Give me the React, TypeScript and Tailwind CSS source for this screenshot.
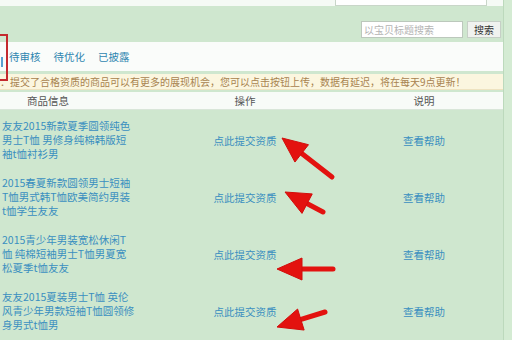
import React from "react";

const rows = [
  ["友友2015新款夏季圆领纯色", "男士T恤 男修身纯棉韩版短", "袖t恤衬衫男"],
  ["2015春夏新款圆领男士短袖", "T恤男式韩T恤欧美简约男装", "t恤学生友友"],
  ["2015青少年男装宽松休闲T", "恤 纯棉短袖男士T恤男夏宽", "松夏季t恤友友"],
  ["友友2015夏装男士T恤 英伦", "风青少年男款短袖T恤圆领修", "身男式t恤男"],
];

function Arrow({ x1, y1, x2, y2 }: { x1: number; y1: number; x2: number; y2: number }) {
  const dx = x2 - x1;
  const dy = y2 - y1;
  const len = Math.hypot(dx, dy);
  const ux = dx / len;
  const uy = dy / len;
  const hl = 25;
  const hw = 11;
  const bx = x1 + ux * hl;
  const by = y1 + uy * hl;
  const px = -uy;
  const py = ux;
  const pts = `${x1},${y1} ${bx + px * hw},${by + py * hw} ${bx - px * hw},${by - py * hw}`;
  return (
    <g>
      <line x1={bx - ux * 4} y1={by - uy * 4} x2={x2} y2={y2} stroke="#e3120f" strokeWidth={5} strokeLinecap="round" />
      <polygon points={pts} fill="#e3120f" stroke="#d20d0b" strokeWidth={1} strokeLinejoin="round" />
    </g>
  );
}

export default function App() {
  return (
    <div
      className="relative w-[512px] h-[340px] overflow-hidden bg-[#cfe7cf] flex"
      style={{ fontFamily: '"Noto Sans CJK SC", "Noto Sans", sans-serif' }}
    >
      <div className="w-[503px] flex flex-col">
        <div className="h-[7px] bg-[#f5faf5] flex justify-end pr-[16px]">
          <div className="w-[152px] h-[6px] border-x border-b border-[#c9d6c9] bg-white" />
        </div>
        <div className="h-[40px] flex items-end justify-end pr-[2px] pb-[4px] gap-[4px]">
          <div className="w-[102px] h-[17px] bg-white border border-[#bcc8bc] text-[10px] leading-[15px] text-[#b4b4b4] pl-[2px]">
            以宝贝标题搜索
          </div>
          <div className="w-[34px] h-[17px] bg-[#f0f2ef] border border-[#c6cfc6] text-[10px] leading-[15px] text-[#333] text-center">
            搜索
          </div>
        </div>
        <div className="h-[33px] bg-[#fafcfa] flex items-center gap-[13px] pl-[9px] text-[10.5px] text-[#2f86b0]">
          <span>待审核</span>
          <span>待优化</span>
          <span>已披露</span>
        </div>
        <div className="mt-[3px] h-[16px] bg-[#fbf6df] border-b border-[#eee3c0] text-[10px] leading-[16px] text-[#a8834f] whitespace-nowrap">
          ：提交了合格资质的商品可以有更多的展现机会，您可以点击按钮上传，数据有延迟，将在每天9点更新！
        </div>
        <div className="mt-[2px] h-[20px] bg-[#f8fbf8] border-b border-[#d9e6d9] flex items-center text-[10.5px] text-[#555]">
          <div className="w-[132px] pl-[27px]">商品信息</div>
          <div className="w-[226px] text-center">操作</div>
          <div className="w-[132px] text-center">说明</div>
        </div>
        <div className="mt-[2px] flex flex-col">
          {rows.map((r, i) => (
            <div key={i} className="h-[57px] flex items-center text-[10.5px] text-[#3a8fc0]">
              <div className="w-[132px] pl-[2px] leading-[14px] whitespace-nowrap">
                {r.map((l, j) => (
                  <div key={j}>{l}</div>
                ))}
              </div>
              <div className="w-[226px] text-center">点此提交资质</div>
              <div className="w-[132px] text-center">查看帮助</div>
            </div>
          ))}
        </div>
      </div>
      <div className="flex-1 border-l border-[#bcd9bc] bg-[#d4ebd3]" />

      <div className="absolute left-[-2px] top-[34px] w-[10px] h-[47px] border-2 border-[#c42a2e]" />
      <div className="absolute left-[1px] top-[57px] w-[2px] h-[10px] bg-[#5aa0d0]" />

      <svg className="absolute left-0 top-0" width={512} height={340}>
        <Arrow x1={282} y1={138} x2={332} y2={177} />
        <Arrow x1={285} y1={192} x2={323} y2={212} />
        <Arrow x1={277} y1={269} x2={333} y2={269} />
        <Arrow x1={277} y1={327} x2={325} y2={312} />
      </svg>
    </div>
  );
}
